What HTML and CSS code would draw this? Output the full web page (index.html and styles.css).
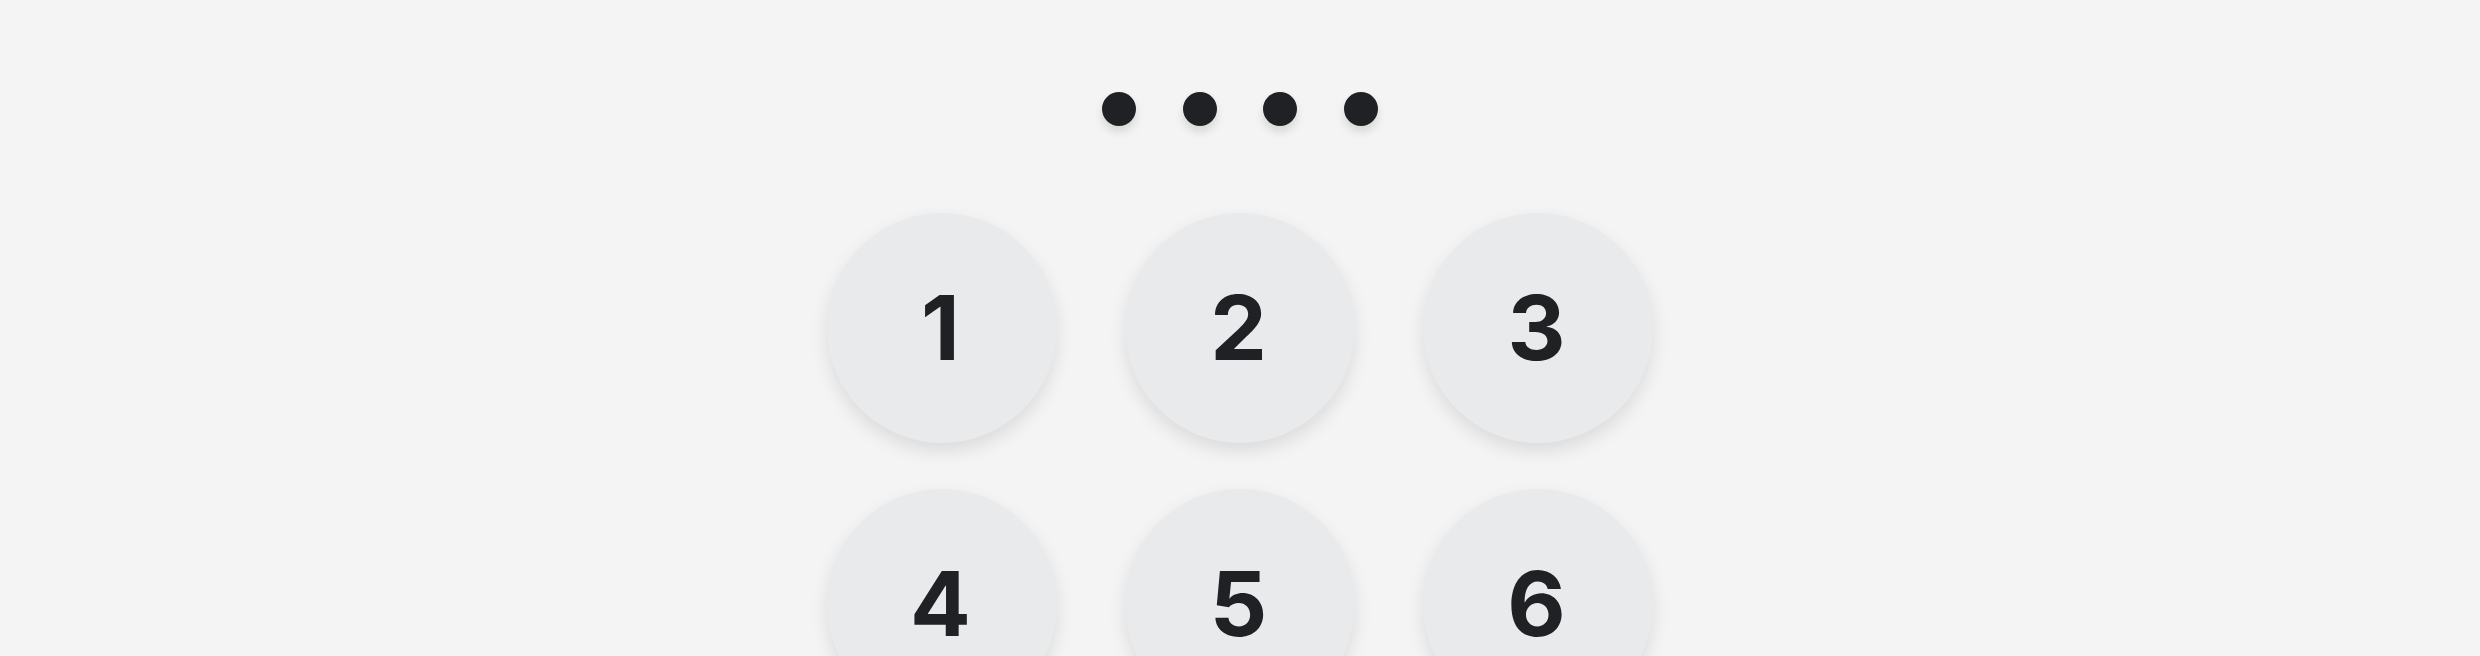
FILE: index.html
```html
<!DOCTYPE html>
<html lang="en">
<head>
<meta charset="utf-8">
<title>PIN</title>
<link rel="stylesheet" href="styles.css">
</head>
<body>
<main class="lock">
  <div class="dots">
    <span class="dot"></span>
    <span class="dot"></span>
    <span class="dot"></span>
    <span class="dot"></span>
  </div>
  <div class="keypad">
    <button class="key">1</button>
    <button class="key">2</button>
    <button class="key">3</button>
    <button class="key">4</button>
    <button class="key">5</button>
    <button class="key">6</button>
    <button class="key">7</button>
    <button class="key">8</button>
    <button class="key">9</button>
  </div>
</main>
</body>
</html>
```

FILE: styles.css
```css
html, body {
  margin: 0;
  padding: 0;
  background: #f4f4f4;
  height: 100%;
  overflow: hidden;
}

.lock {
  display: flex;
  flex-direction: column;
  align-items: center;
  padding-top: 92px;
  font-family: Inter, "Liberation Sans", sans-serif;
}

.dots {
  display: flex;
  gap: 46.5px;
}

.dot {
  width: 34px;
  height: 34px;
  border-radius: 50%;
  background: #202124;
  box-shadow: 0 6px 10px rgba(0, 0, 0, 0.12);
}

.keypad {
  margin-top: 86.5px;
  display: grid;
  grid-template-columns: repeat(3, 230px);
  column-gap: 68px;
  row-gap: 46px;
}

.key {
  width: 230px;
  height: 230px;
  border: none;
  border-radius: 50%;
  background: #e9eaeb;
  color: #202124;
  font-family: Inter, "Liberation Sans", sans-serif;
  font-weight: 700;
  font-size: 90px;
  line-height: 1;
  padding: 0 3px 0 0;
  display: flex;
  align-items: center;
  justify-content: center;
  box-shadow: 0 8px 18px rgba(0, 0, 0, 0.1);
}
```
